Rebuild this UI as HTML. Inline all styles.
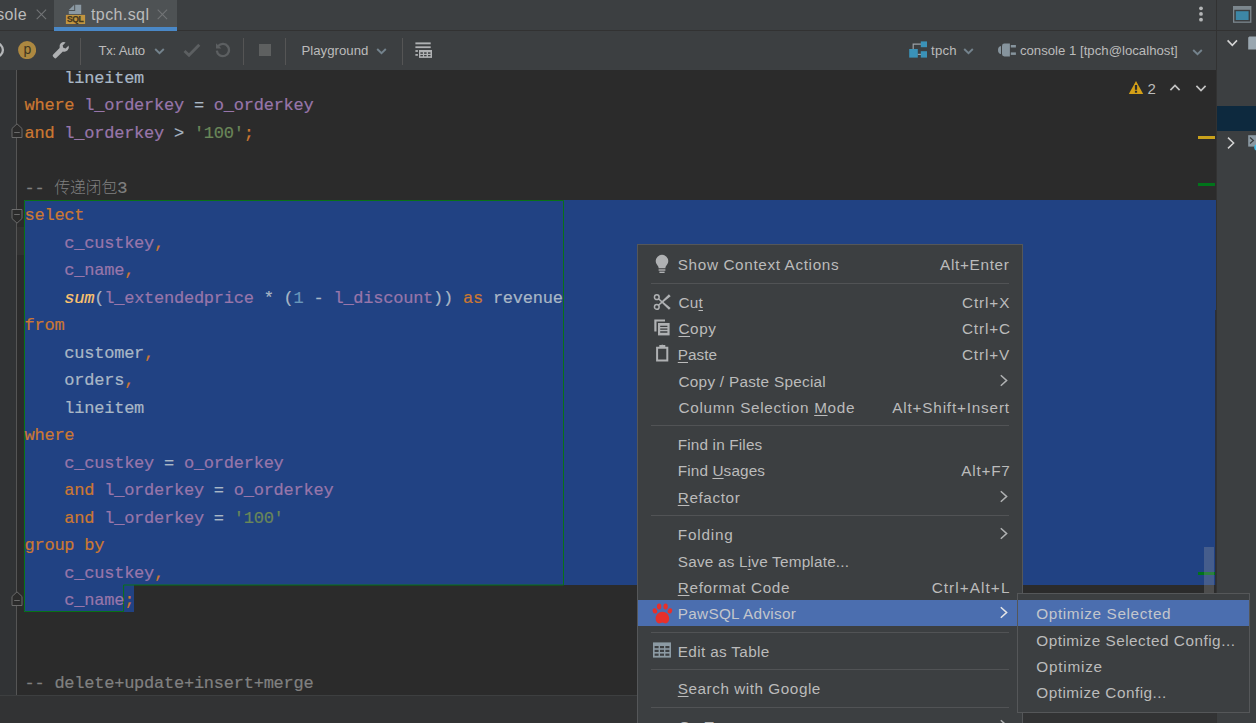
<!DOCTYPE html>
<html lang="en"><head><meta charset="utf-8"><title>tpch.sql</title>
<style>
html,body{margin:0;padding:0;}
body{width:1256px;height:723px;overflow:hidden;background:#2b2b2b;position:relative;font-family:"Liberation Sans", "Noto Sans CJK SC", sans-serif;}
.b{position:absolute;display:block;}
.t{position:absolute;white-space:pre;line-height:0;height:0;display:block;}
.t u{text-decoration:underline;text-decoration-thickness:1px;text-underline-offset:1.5px;}
.m{font-family:"Liberation Mono", "Noto Sans CJK SC", monospace;-webkit-text-stroke:0.2px;}
</style></head>
<body>
<div class="b" style="left:0px;top:70px;width:1216px;height:625px;background:#2b2b2b;"></div>
<div class="b" style="left:0px;top:70px;width:16px;height:625px;background:#313335;"></div>
<div class="b" style="left:17px;top:227px;width:8px;height:28px;background:#323232;"></div>
<div class="b" style="left:24px;top:200px;width:1192px;height:384.7px;background:#214283;"></div>
<div class="b" style="left:24px;top:584px;width:109.8px;height:28px;background:#214283;"></div>
<div class="b" style="left:1215px;top:310px;width:1px;height:275px;background:#2b2f3a;"></div>
<svg class="b" style="left:0;top:0" width="1256" height="723"><path d="M24.5 200.5H563.5V585H123.6V611.5H24.5Z" fill="none" stroke="#087216" stroke-width="1"/></svg>
<div class="b" style="left:16px;top:70px;width:1px;height:625px;background:#555555;"></div>
<span class="t m" style="left:24.5px;top:78.75px;font-size:17px;letter-spacing:-0.238px;"><span style="color:#a9b7c6;">    lineitem</span></span>
<span class="t m" style="left:24.5px;top:106.25px;font-size:17px;letter-spacing:-0.238px;"><span style="color:#cc7832;">where </span><span style="color:#9876aa;">l_orderkey</span><span style="color:#a9b7c6;"> = </span><span style="color:#9876aa;">o_orderkey</span></span>
<span class="t m" style="left:24.5px;top:133.75px;font-size:17px;letter-spacing:-0.238px;"><span style="color:#cc7832;">and </span><span style="color:#9876aa;">l_orderkey</span><span style="color:#a9b7c6;"> &gt; </span><span style="color:#6a8759;">&#x27;100&#x27;</span><span style="color:#cc7832;">;</span></span>
<span class="t m" style="left:24.5px;top:188.75px;font-size:17px;letter-spacing:-0.238px;"><span style="color:#808080;">-- </span><span style="color:#808080;font-size:15.8px;letter-spacing:-0.1px;-webkit-text-stroke:0;font-weight:300;">传递闭包</span><span style="color:#808080;">3</span></span>
<span class="t m" style="left:24.5px;top:216.25px;font-size:17px;letter-spacing:-0.238px;"><span style="color:#cc7832;">select</span></span>
<span class="t m" style="left:24.5px;top:243.75px;font-size:17px;letter-spacing:-0.238px;"><span style="color:#9876aa;">    c_custkey</span><span style="color:#cc7832;">,</span></span>
<span class="t m" style="left:24.5px;top:271.25px;font-size:17px;letter-spacing:-0.238px;"><span style="color:#9876aa;">    c_name</span><span style="color:#cc7832;">,</span></span>
<span class="t m" style="left:24.5px;top:298.75px;font-size:17px;letter-spacing:-0.238px;"><span style="color:#a9b7c6;">    </span><span style="color:#ffc66d;font-style:italic;">sum</span><span style="color:#a9b7c6;">(</span><span style="color:#9876aa;">l_extendedprice</span><span style="color:#a9b7c6;"> * (</span><span style="color:#6897bb;">1</span><span style="color:#a9b7c6;"> - </span><span style="color:#9876aa;">l_discount</span><span style="color:#a9b7c6;">)) </span><span style="color:#cc7832;">as </span><span style="color:#a9b7c6;">revenue</span></span>
<span class="t m" style="left:24.5px;top:326.25px;font-size:17px;letter-spacing:-0.238px;"><span style="color:#cc7832;">from</span></span>
<span class="t m" style="left:24.5px;top:353.75px;font-size:17px;letter-spacing:-0.238px;"><span style="color:#a9b7c6;">    customer</span><span style="color:#cc7832;">,</span></span>
<span class="t m" style="left:24.5px;top:381.25px;font-size:17px;letter-spacing:-0.238px;"><span style="color:#a9b7c6;">    orders</span><span style="color:#cc7832;">,</span></span>
<span class="t m" style="left:24.5px;top:408.75px;font-size:17px;letter-spacing:-0.238px;"><span style="color:#a9b7c6;">    lineitem</span></span>
<span class="t m" style="left:24.5px;top:436.25px;font-size:17px;letter-spacing:-0.238px;"><span style="color:#cc7832;">where</span></span>
<span class="t m" style="left:24.5px;top:463.75px;font-size:17px;letter-spacing:-0.238px;"><span style="color:#9876aa;">    c_custkey</span><span style="color:#a9b7c6;"> = </span><span style="color:#9876aa;">o_orderkey</span></span>
<span class="t m" style="left:24.5px;top:491.25px;font-size:17px;letter-spacing:-0.238px;"><span style="color:#cc7832;">    and </span><span style="color:#9876aa;">l_orderkey</span><span style="color:#a9b7c6;"> = </span><span style="color:#9876aa;">o_orderkey</span></span>
<span class="t m" style="left:24.5px;top:518.75px;font-size:17px;letter-spacing:-0.238px;"><span style="color:#cc7832;">    and </span><span style="color:#9876aa;">l_orderkey</span><span style="color:#a9b7c6;"> = </span><span style="color:#6a8759;">&#x27;100&#x27;</span></span>
<span class="t m" style="left:24.5px;top:546.25px;font-size:17px;letter-spacing:-0.238px;"><span style="color:#cc7832;">group by</span></span>
<span class="t m" style="left:24.5px;top:573.75px;font-size:17px;letter-spacing:-0.238px;"><span style="color:#9876aa;">    c_custkey</span><span style="color:#cc7832;">,</span></span>
<span class="t m" style="left:24.5px;top:601.25px;font-size:17px;letter-spacing:-0.238px;"><span style="color:#9876aa;">    c_name</span><span style="color:#cc7832;">;</span></span>
<span class="t m" style="left:24.5px;top:683.75px;font-size:17px;letter-spacing:-0.238px;"><span style="color:#808080;">-- delete+update+insert+merge</span></span>
<svg class="b" style="left:10.5px;top:123.0px;" width="12" height="15" viewBox="0 0 12 15"><path d="M1 14.5V5.5L6 0.8L11 5.5V14.5Z" fill="#2b2b2b" stroke="#6a6a6a" stroke-width="1"/><path d="M3.2 9.5H8.8" stroke="#6a6a6a" stroke-width="1"/></svg>
<svg class="b" style="left:10.5px;top:209.0px;" width="12" height="15" viewBox="0 0 12 15"><path d="M1 0.5V9.5L6 14.2L11 9.5V0.5Z" fill="#2b2b2b" stroke="#6a6a6a" stroke-width="1"/><path d="M3.2 5.5H8.8" stroke="#6a6a6a" stroke-width="1"/></svg>
<svg class="b" style="left:10.5px;top:591.0px;" width="12" height="15" viewBox="0 0 12 15"><path d="M1 14.5V5.5L6 0.8L11 5.5V14.5Z" fill="#2b2b2b" stroke="#6a6a6a" stroke-width="1"/><path d="M3.2 9.5H8.8" stroke="#6a6a6a" stroke-width="1"/></svg>
<div class="b" style="left:0px;top:695px;width:1256px;height:28px;background:#323334;"></div>
<div class="b" style="left:0px;top:695px;width:1216px;height:1px;background:#3d3f40;"></div>
<div class="b" style="left:1198px;top:136px;width:17px;height:3px;background:#c9a11b;"></div>
<div class="b" style="left:1198px;top:182.5px;width:17px;height:3px;background:#00741a;"></div>
<div class="b" style="left:1198px;top:572px;width:17px;height:3px;background:#00741a;"></div>
<div class="b" style="left:1204px;top:547px;width:10px;height:38px;background:rgba(166,166,166,0.28);"></div>
<div class="b" style="left:1204px;top:585px;width:10px;height:110px;background:rgba(166,166,166,0.28);"></div>
<svg class="b" style="left:1128px;top:80px;" width="16" height="15" viewBox="0 0 16 15"><path d="M8 1L15.2 14H0.8Z" fill="#d4a017"/><rect x="6.9" y="5" width="2.2" height="4.8" fill="#2b2b2b"/><rect x="6.9" y="10.7" width="2.2" height="2" fill="#2b2b2b"/></svg>
<span class="t" style="left:1147.45px;top:89.00px;font-size:15px;color:#bbbbbb;">2</span>
<svg class="b" style="left:1168px;top:82px;" width="14" height="11" viewBox="0 0 14 11"><path d="M2.4 8.1L7 3.5L11.6 8.1" fill="none" stroke="#c4c4c4" stroke-width="1.7"/></svg>
<svg class="b" style="left:1194px;top:83px;" width="14" height="11" viewBox="0 0 14 11"><path d="M2.4 2.9L7 7.5L11.6 2.9" fill="none" stroke="#c4c4c4" stroke-width="1.7"/></svg>
<div class="b" style="left:0px;top:0px;width:1216px;height:30px;background:#3c3f41;"></div>
<div class="b" style="left:54px;top:0px;width:123px;height:30px;background:#4e5254;"></div>
<div class="b" style="left:0px;top:30px;width:1256px;height:1px;background:#323232;"></div>
<div class="b" style="left:54px;top:27px;width:123px;height:4px;background:#4a88c7;"></div>
<span class="t" style="left:-30.83px;top:15.00px;font-size:16px;color:#bbbbbb;letter-spacing:0.390px;">console</span>
<span class="t" style="left:90.97px;top:15.00px;font-size:16px;color:#bbbbbb;letter-spacing:0.409px;">tpch.sql</span>
<svg class="b" style="left:35.6px;top:8.7px;" width="11" height="11" viewBox="0 0 11 11"><path d="M0.7 0.7L10.1 10.1M10.1 0.7L0.7 10.1" stroke="#727476" stroke-width="1.1" fill="none"/></svg>
<svg class="b" style="left:156.9px;top:8.7px;" width="11" height="11" viewBox="0 0 11 11"><path d="M0.7 0.7L10.1 10.1M10.1 0.7L0.7 10.1" stroke="#727476" stroke-width="1.1" fill="none"/></svg>
<svg class="b" style="left:65px;top:4px;" width="21" height="21" viewBox="0 0 21 21"><path d="M10.2 0.8H16.2V10H3.8V7H10.2Z" fill="#8b99a3"/><path d="M9.2 0.8V6H3.8Z" fill="#8b99a3"/><rect x="0.9" y="10.9" width="19.2" height="9.1" fill="#c2953f"/></svg>
<span class="t" style="left:67.04px;top:19.00px;font-size:8.6px;color:#43371f;letter-spacing:-0.477px;font-weight:bold;-webkit-text-stroke:0.25px;">SQL</span>
<svg class="b" style="left:1198px;top:5px;" width="6" height="18" viewBox="0 0 6 18"><circle cx="3" cy="3.3" r="1.9" fill="#b4b6b7"/><circle cx="3" cy="8.9" r="1.9" fill="#b4b6b7"/><circle cx="3" cy="14.7" r="1.9" fill="#b4b6b7"/></svg>
<div class="b" style="left:0px;top:31px;width:1216px;height:39px;background:#3c3f41;"></div>
<svg class="b" style="left:0px;top:41px;" width="5" height="18" viewBox="0 0 5 18"><circle cx="-3.9" cy="9" r="6.8" fill="none" stroke="#b4b6b8" stroke-width="2.3"/></svg>
<svg class="b" style="left:18px;top:40.9px;" width="18.2" height="18.2" viewBox="0 0 18.2 18.2"><circle cx="9.1" cy="9.1" r="9.05" fill="#ad8840"/></svg>
<span class="t" style="left:23.46px;top:49.00px;font-size:14px;color:#41361f;">p</span>
<svg class="b" style="left:52px;top:41px;" width="18" height="18" viewBox="0 0 18 18"><path d="M16.6 4.4l-3 3-2.3-.7-.7-2.3 3-3a4.6 4.6 0 0 0-6 5.7L1.2 13.5a1.6 1.6 0 0 0 0 2.3l1 1a1.6 1.6 0 0 0 2.3 0L10.9 10.4a4.6 4.6 0 0 0 5.7-6Z" fill="#afb1b3"/></svg>
<div class="b" style="left:80px;top:38px;width:1px;height:27px;background:#555555;"></div>
<span class="t" style="left:98.45px;top:51.00px;font-size:13.2px;color:#bbbbbb;letter-spacing:-0.238px;">Tx: Auto</span>
<svg class="b" style="left:154px;top:48px;" width="11" height="7" viewBox="0 0 11 7"><path d="M1.2 1L5.5 5.2L9.8 1" fill="none" stroke="#74838d" stroke-width="1.9"/></svg>
<svg class="b" style="left:183px;top:43px;" width="18" height="14" viewBox="0 0 18 14"><path d="M1.5 8L6 12.2L16.3 1.8" fill="none" stroke="#5c5f61" stroke-width="2.9"/></svg>
<svg class="b" style="left:215px;top:42px;" width="16" height="16" viewBox="0 0 16 16"><path d="M3.2 4.1A6.1 6.1 0 1 1 1.8 8.6" fill="none" stroke="#5c5f61" stroke-width="2.3"/><path d="M1 1.2V6.6H6.4Z" fill="#5c5f61"/></svg>
<div class="b" style="left:243px;top:38px;width:1px;height:27px;background:#555555;"></div>
<div class="b" style="left:258.7px;top:43.9px;width:12.6px;height:12.4px;background:#5e6060;"></div>
<div class="b" style="left:285px;top:38px;width:1px;height:27px;background:#555555;"></div>
<span class="t" style="left:301.53px;top:51.00px;font-size:13.2px;color:#bbbbbb;letter-spacing:0.012px;">Playground</span>
<svg class="b" style="left:376px;top:48px;" width="11" height="7" viewBox="0 0 11 7"><path d="M1.2 1L5.5 5.2L9.8 1" fill="none" stroke="#74838d" stroke-width="1.9"/></svg>
<div class="b" style="left:402px;top:38px;width:1px;height:27px;background:#555555;"></div>
<svg class="b" style="left:415px;top:42px;" width="18" height="16" viewBox="0 0 18 16"><g fill="#afb1b3"><rect x="0.4" y="0.4" width="15.3" height="1.9"/><rect x="0.4" y="4.3" width="15.3" height="1.8"/><rect x="0.4" y="8.1" width="2.5" height="1.8"/><rect x="0.4" y="12" width="2.5" height="1.8"/><rect x="4" y="8" width="13" height="7.9"/></g><g fill="#3c3f41"><rect x="5.4" y="10.3" width="2.5" height="1.5"/><rect x="9.1" y="10.3" width="2.5" height="1.5"/><rect x="13" y="10.3" width="2.5" height="1.5"/><rect x="5.4" y="13" width="2.5" height="1.3"/><rect x="9.1" y="13" width="2.5" height="1.3"/><rect x="13" y="13" width="2.5" height="1.3"/></g></svg>
<svg class="b" style="left:908px;top:40px;" width="20" height="19" viewBox="0 0 20 19"><path d="M5.2 9V4.2H13" fill="none" stroke="#9aa1a6" stroke-width="1.2"/><path d="M9.5 14.4H13" fill="none" stroke="#9aa1a6" stroke-width="1.2"/><rect x="1.2" y="9" width="8.6" height="8.6" fill="#3a92b8"/><rect x="12.8" y="1.4" width="6.2" height="5.8" fill="#3a92b8"/><rect x="12.8" y="11.2" width="6.2" height="6.4" fill="#3a92b8"/></svg>
<span class="t" style="left:931.02px;top:51.00px;font-size:13.2px;color:#bbbbbb;letter-spacing:0.249px;">tpch</span>
<svg class="b" style="left:963px;top:48px;" width="11" height="7" viewBox="0 0 11 7"><path d="M1.2 1L5.5 5.2L9.8 1" fill="none" stroke="#74838d" stroke-width="1.9"/></svg>
<svg class="b" style="left:997px;top:42px;" width="20" height="16" viewBox="0 0 20 16"><g fill="#86949d"><path d="M4 4Q1 4.4 1 8Q1 11.7 4 12.1Z"/><path d="M7.4 1.6H12.9V14.4H7.4Q5 14.4 5 12V4Q5 1.6 7.4 1.6Z"/><rect x="13.8" y="3" width="5.1" height="2.5"/><rect x="13.8" y="10.4" width="5.1" height="2.5"/></g></svg>
<span class="t" style="left:1019.93px;top:51.00px;font-size:13.2px;color:#bbbbbb;">console 1 [tpch@localhost]</span>
<svg class="b" style="left:1191.5px;top:48.5px;" width="11" height="7" viewBox="0 0 11 7"><path d="M1.2 1L5.5 5.2L9.8 1" fill="none" stroke="#74838d" stroke-width="1.9"/></svg>
<div class="b" style="left:1216px;top:0px;width:1px;height:723px;background:#323232;"></div>
<div class="b" style="left:1217px;top:0px;width:39px;height:30px;background:#3c3f41;"></div>
<div class="b" style="left:1217px;top:31px;width:39px;height:692px;background:#3c3f41;"></div>
<div class="b" style="left:1217px;top:106px;width:39px;height:25px;background:#0d293e;"></div>
<svg class="b" style="left:1233px;top:6px;" width="19" height="17" viewBox="0 0 19 17"><rect x="0" y="0" width="18.4" height="16.8" fill="#7c878e"/><rect x="1.3" y="3.8" width="15.8" height="11.7" fill="#3c3f41"/><rect x="2.8" y="5.2" width="12.8" height="8.8" fill="#3d87a6"/></svg>
<svg class="b" style="left:1225.5px;top:39px;" width="13" height="9" viewBox="0 0 13 9"><path d="M1.6 1.4L6.3 6.4L11 1.4" fill="none" stroke="#d4d4d4" stroke-width="1.6"/></svg>
<svg class="b" style="left:1248px;top:36px;" width="8" height="14" viewBox="0 0 8 14"><path d="M1.4 0.4H8V13.6H0.2V1.6Z" fill="#9aa7b0"/></svg>
<svg class="b" style="left:1226px;top:136px;" width="10" height="14" viewBox="0 0 10 14"><path d="M2 1.6L7.6 7L2 12.4" fill="none" stroke="#d4d4d4" stroke-width="1.5"/></svg>
<svg class="b" style="left:1248px;top:135px;" width="8" height="18" viewBox="0 0 8 18"><rect x="0.2" y="0.2" width="8" height="11.4" fill="#8a98a2"/><path d="M2 2.6L5.4 5.6L2 8.6" fill="none" stroke="#3c3f41" stroke-width="1.3"/><circle cx="9.4" cy="12.6" r="3.2" fill="#40b6e0"/></svg>
<div class="b" style="left:637px;top:244px;width:386px;height:490px;background:#3c3f41;box-sizing:border-box;border:1px solid #555759;"></div>
<div class="b" style="left:638px;top:600px;width:384px;height:26px;background:#4b6eaf;"></div>
<span class="t" style="left:677.79px;top:265.00px;font-size:15.3px;color:#bbbbbb;letter-spacing:0.630px;">Show Context Actions</span>
<span class="t" style="left:940.07px;top:265.00px;font-size:15.3px;color:#bbbbbb;letter-spacing:0.685px;">Alt+Enter</span>
<div class="b" style="left:651px;top:283px;width:358px;height:1px;background:#515355;"></div>
<span class="t" style="left:678.53px;top:303.00px;font-size:15.3px;color:#bbbbbb;letter-spacing:0.213px;">Cu<u>t</u></span>
<span class="t" style="left:961.93px;top:303.00px;font-size:15.3px;color:#bbbbbb;letter-spacing:0.911px;">Ctrl+X</span>
<span class="t" style="left:678.53px;top:329.00px;font-size:15.3px;color:#bbbbbb;letter-spacing:0.526px;"><u>C</u>opy</span>
<span class="t" style="left:961.93px;top:329.00px;font-size:15.3px;color:#bbbbbb;letter-spacing:0.867px;">Ctrl+C</span>
<span class="t" style="left:677.77px;top:355.00px;font-size:15.3px;color:#bbbbbb;letter-spacing:0.023px;"><u>P</u>aste</span>
<span class="t" style="left:961.93px;top:355.00px;font-size:15.3px;color:#bbbbbb;letter-spacing:0.877px;">Ctrl+V</span>
<span class="t" style="left:678.53px;top:382.00px;font-size:15.3px;color:#bbbbbb;letter-spacing:0.275px;">Copy / Paste Special</span>
<svg class="b" style="left:999px;top:373.5px;" width="10" height="13" viewBox="0 0 10 13"><path d="M1.8 1.2L7.6 6.5L1.8 11.8" fill="none" stroke="#b0b2b3" stroke-width="1.55"/></svg>
<span class="t" style="left:678.53px;top:408.00px;font-size:15.3px;color:#bbbbbb;letter-spacing:0.677px;">Column Selection <u>M</u>ode</span>
<span class="t" style="left:892.27px;top:408.00px;font-size:15.3px;color:#bbbbbb;letter-spacing:0.813px;">Alt+Shift+Insert</span>
<div class="b" style="left:651px;top:425px;width:358px;height:1px;background:#515355;"></div>
<span class="t" style="left:677.77px;top:445.00px;font-size:15.3px;color:#bbbbbb;letter-spacing:0.167px;">Find in Files</span>
<span class="t" style="left:677.77px;top:471.00px;font-size:15.3px;color:#bbbbbb;letter-spacing:0.129px;">Find <u>U</u>sages</span>
<span class="t" style="left:961.17px;top:471.00px;font-size:15.3px;color:#bbbbbb;letter-spacing:0.812px;">Alt+F7</span>
<span class="t" style="left:677.77px;top:498.00px;font-size:15.3px;color:#bbbbbb;letter-spacing:0.596px;"><u>R</u>efactor</span>
<svg class="b" style="left:999px;top:490.0px;" width="10" height="13" viewBox="0 0 10 13"><path d="M1.8 1.2L7.6 6.5L1.8 11.8" fill="none" stroke="#b0b2b3" stroke-width="1.55"/></svg>
<div class="b" style="left:651px;top:515px;width:358px;height:1px;background:#515355;"></div>
<span class="t" style="left:677.77px;top:535.00px;font-size:15.3px;color:#bbbbbb;letter-spacing:0.803px;">Folding</span>
<svg class="b" style="left:999px;top:527.0px;" width="10" height="13" viewBox="0 0 10 13"><path d="M1.8 1.2L7.6 6.5L1.8 11.8" fill="none" stroke="#b0b2b3" stroke-width="1.55"/></svg>
<span class="t" style="left:677.79px;top:562.00px;font-size:15.3px;color:#bbbbbb;letter-spacing:0.211px;">Save as L<u>i</u>ve Template...</span>
<span class="t" style="left:677.77px;top:588.00px;font-size:15.3px;color:#bbbbbb;letter-spacing:0.671px;"><u>R</u>eformat Code</span>
<span class="t" style="left:931.63px;top:588.00px;font-size:15.3px;color:#bbbbbb;letter-spacing:1.083px;">Ctrl+Alt+L</span>
<span class="t" style="left:677.77px;top:614.00px;font-size:15.3px;color:#c3c6cc;letter-spacing:0.300px;">PawSQL Advisor</span>
<svg class="b" style="left:999px;top:605.8px;" width="10" height="13" viewBox="0 0 10 13"><path d="M1.8 1.2L7.6 6.5L1.8 11.8" fill="none" stroke="#e6e6e6" stroke-width="1.55"/></svg>
<div class="b" style="left:651px;top:631.5px;width:358px;height:1px;background:#515355;"></div>
<span class="t" style="left:677.77px;top:652.00px;font-size:15.3px;color:#bbbbbb;letter-spacing:0.357px;">Edit as Table</span>
<div class="b" style="left:651px;top:669px;width:358px;height:1px;background:#515355;"></div>
<span class="t" style="left:677.79px;top:689.00px;font-size:15.3px;color:#bbbbbb;letter-spacing:0.534px;"><u>S</u>earch with Google</span>
<div class="b" style="left:651px;top:706.5px;width:358px;height:1px;background:#515355;"></div>
<span class="t" style="left:678.54px;top:727.00px;font-size:15.3px;color:#bbbbbb;letter-spacing:0.509px;">Go To</span>
<svg class="b" style="left:999px;top:718.5px;" width="10" height="13" viewBox="0 0 10 13"><path d="M1.8 1.2L7.6 6.5L1.8 11.8" fill="none" stroke="#b0b2b3" stroke-width="1.55"/></svg>
<svg class="b" style="left:655px;top:254px;" width="14" height="20" viewBox="0 0 14 20"><path d="M7 0.8A6.3 6.3 0 0 0 0.7 7.1C0.7 9.6 2.3 11 3.1 12.3C3.5 13 3.6 13.6 3.6 14.2H10.4C10.4 13.6 10.5 13 10.9 12.3C11.7 11 13.3 9.6 13.3 7.1A6.3 6.3 0 0 0 7 0.8Z" fill="#afb1b3"/><rect x="3.6" y="15.3" width="6.8" height="1.4" fill="#afb1b3"/><rect x="4.4" y="17.6" width="5.2" height="1.4" fill="#afb1b3"/></svg>
<svg class="b" style="left:653px;top:293px;" width="19" height="18" viewBox="0 0 19 18"><circle cx="3.8" cy="4.2" r="2.35" fill="none" stroke="#afb1b3" stroke-width="1.5"/><circle cx="3.8" cy="13.9" r="2.35" fill="none" stroke="#afb1b3" stroke-width="1.5"/><path d="M5.9 5.35L17.67 14.93L15.93 16.87L5.1 6.25Z" fill="#afb1b3"/><path d="M5.9 12.75L17.67 3.17L15.93 1.23L5.1 11.85Z" fill="#afb1b3"/></svg>
<svg class="b" style="left:654px;top:319px;" width="17" height="17" viewBox="0 0 17 17"><path d="M0.3 0.4H11V2.6H2.5V12.4H0.3Z" fill="#afb1b3"/><rect x="4" y="4" width="11.6" height="12.4" fill="#afb1b3"/><path d="M6.2 7.4H13.4M6.2 10.2H13.4M6.2 13H13.4" stroke="#3c3f41" stroke-width="1.3"/></svg>
<svg class="b" style="left:655px;top:344px;" width="15" height="18" viewBox="0 0 15 18"><path d="M2.1 3.8H12.3V16.4H2.1Z" fill="none" stroke="#afb1b3" stroke-width="2"/><path d="M4.3 1.1H6.4Q7.2 -0.3 8 1.1H10.3V4H4.3Z" fill="#afb1b3"/></svg>
<svg class="b" style="left:652px;top:603px;" width="21" height="21" viewBox="0 0 21 21"><g fill="#e8302a"><ellipse cx="7.1" cy="3.6" rx="2.2" ry="3"/><ellipse cx="13.6" cy="3.6" rx="2.2" ry="3"/><ellipse cx="2.9" cy="7.9" rx="2.2" ry="2.7" transform="rotate(-20 2.9 7.9)"/><ellipse cx="17.9" cy="7.9" rx="2.2" ry="2.7" transform="rotate(20 17.9 7.9)"/><path d="M10.4 8.8C6.6 8.8 3.6 12 3.6 15.6C3.6 18.6 5.2 20.4 7.2 20.4C8.6 20.4 9.2 19.4 10.4 19.4C11.6 19.4 12.2 20.4 13.6 20.4C15.6 20.4 17.2 18.6 17.2 15.6C17.2 12 14.2 8.8 10.4 8.8Z"/></g></svg>
<svg class="b" style="left:653px;top:642px;" width="18" height="16" viewBox="0 0 18 16"><rect x="0" y="0.4" width="18" height="15.2" fill="#8c9aa3"/><g fill="#3c3f41"><rect x="1.6" y="4" width="4" height="2.2"/><rect x="7" y="4" width="4" height="2.2"/><rect x="12.4" y="4" width="4" height="2.2"/><rect x="1.6" y="7.8" width="4" height="2.2"/><rect x="7" y="7.8" width="4" height="2.2"/><rect x="12.4" y="7.8" width="4" height="2.2"/><rect x="1.6" y="11.6" width="4" height="2.2"/><rect x="7" y="11.6" width="4" height="2.2"/><rect x="12.4" y="11.6" width="4" height="2.2"/></g></svg>
<div class="b" style="left:1017px;top:593px;width:233px;height:120px;background:#3c3f41;box-sizing:border-box;border:1px solid #555759;"></div>
<div class="b" style="left:1018px;top:600px;width:231px;height:26px;background:#4b6eaf;"></div>
<span class="t" style="left:1036.25px;top:614.00px;font-size:15.3px;color:#c3c6cc;letter-spacing:0.636px;">Optimize Selected</span>
<span class="t" style="left:1036.25px;top:641.00px;font-size:15.3px;color:#bbbbbb;letter-spacing:0.512px;">Optimize Selected Config...</span>
<span class="t" style="left:1036.25px;top:667.00px;font-size:15.3px;color:#bbbbbb;letter-spacing:0.786px;">Optimize</span>
<span class="t" style="left:1036.25px;top:693.00px;font-size:15.3px;color:#bbbbbb;letter-spacing:0.500px;">Optimize Config...</span>
</body></html>
